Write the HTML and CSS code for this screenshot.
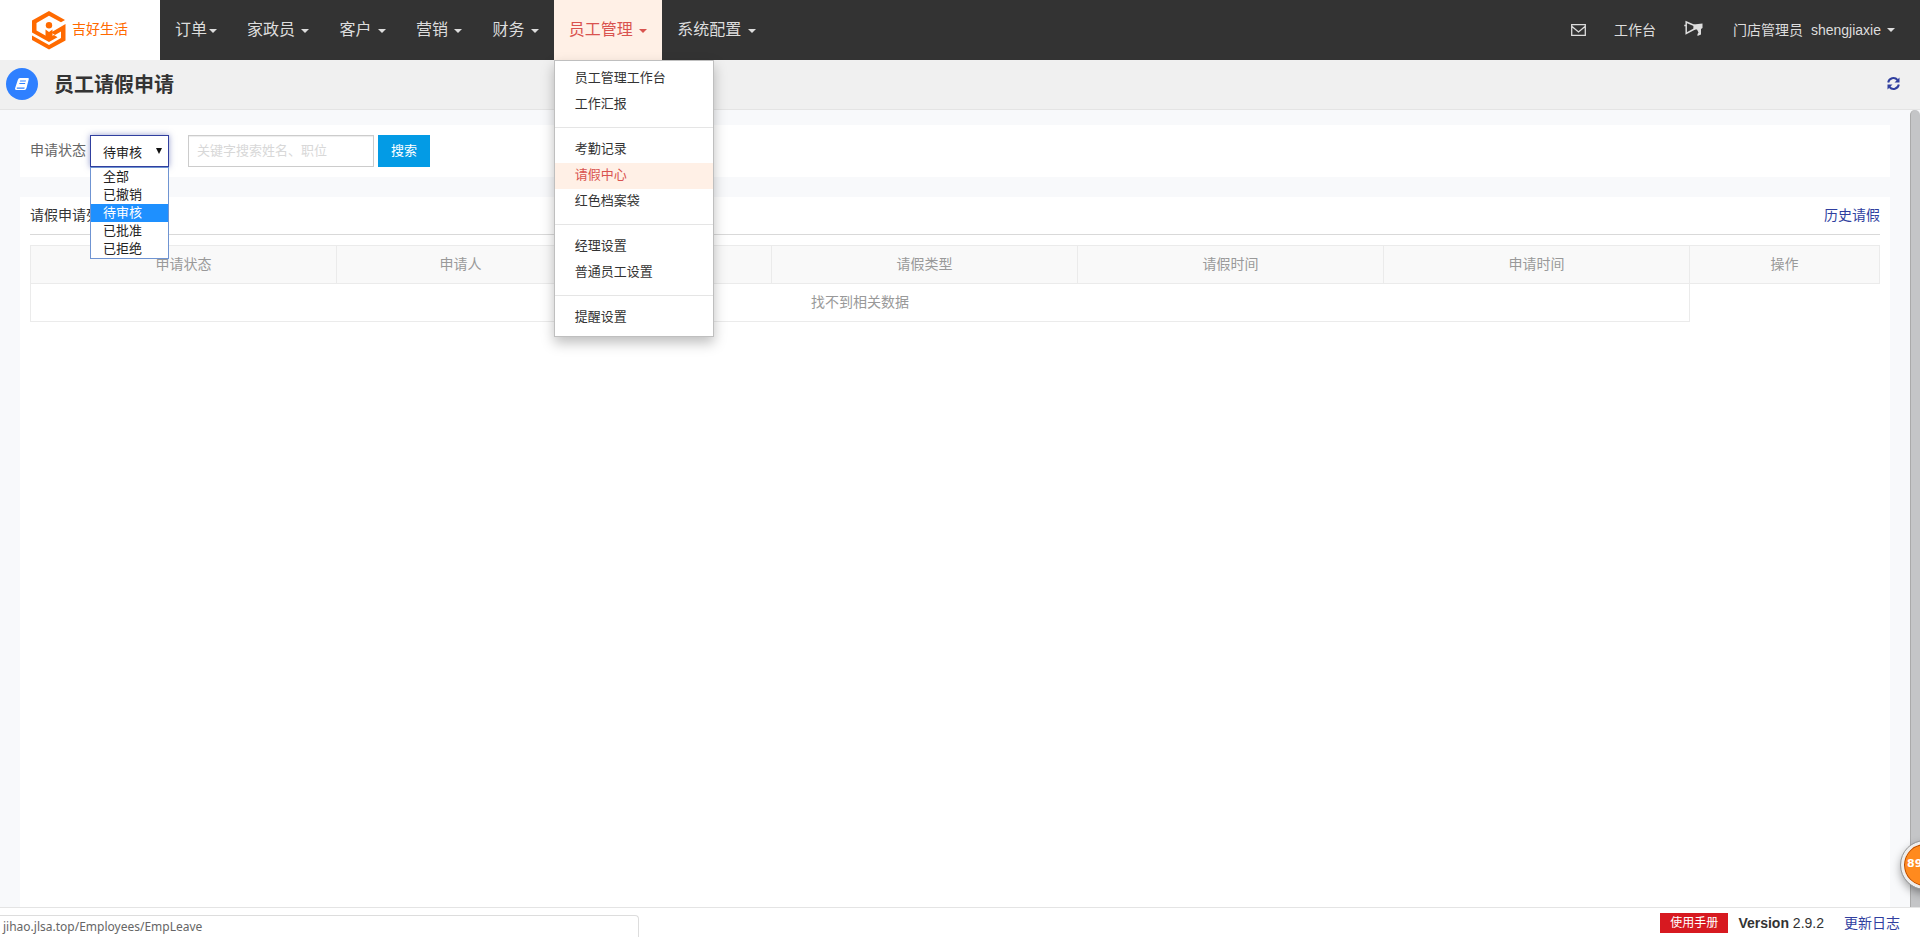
FILE: index.html
```html
<!DOCTYPE html>
<html lang="zh-CN">
<head>
<meta charset="utf-8">
<title>员工请假申请</title>
<link rel="stylesheet" href="styles.css">
</head>
<body>
<header class="topbar">
  <a class="brand" href="#">
    <svg class="brand-mark" viewBox="0 0 34 39" aria-hidden="true">
      <path fill="#ff6a00" d="M17 0 33 9l-4 2.300L17 4.800 4.500 12v7.500L17 26.500 22 24l3.500 2.200L17 31 0 21.500V9.500z"/>
      <path fill="#ff6a00" d="M33.500 13v16.500L17 38.500 0 29v-4.500l17 9.500 12-7v-6.500l-6 3.500-4-2.500z"/>
      <circle cx="17" cy="14.300" r="3.200" fill="#ff6a00"/>
      <path fill="#ff6a00" d="M13.500 18.500 17 21l3.500-2.500V26L17 28l-3.500-2z"/>
    </svg>
    <span>吉好生活</span>
  </a>
  <nav class="menu">
    <a class="menu-item" href="#">订单<i class="caret"></i></a>
    <a class="menu-item" href="#">家政员 <i class="caret"></i></a>
    <a class="menu-item" href="#">客户 <i class="caret"></i></a>
    <a class="menu-item" href="#">营销 <i class="caret"></i></a>
    <a class="menu-item" href="#">财务 <i class="caret"></i></a>
    <div class="menu-group">
      <a class="menu-item active" href="#">员工管理 <i class="caret"></i></a>
      <ul class="dropdown">
        <li><a href="#">员工管理工作台</a></li>
        <li><a href="#">工作汇报</a></li>
        <li class="divider"></li>
        <li><a href="#">考勤记录</a></li>
        <li><a class="current" href="#">请假中心</a></li>
        <li><a href="#">红色档案袋</a></li>
        <li class="divider"></li>
        <li><a href="#">经理设置</a></li>
        <li><a href="#">普通员工设置</a></li>
        <li class="divider"></li>
        <li><a href="#">提醒设置</a></li>
      </ul>
    </div>
    <a class="menu-item" href="#">系统配置 <i class="caret"></i></a>
  </nav>
  <div class="tools">
    <a href="#" aria-label="消息"><svg width="15" height="12" viewBox="0 0 15 12"><path fill="none" stroke="currentColor" stroke-width="1.300" d="M.7.700h13.600v10.600H.700zM1 2.500l6.500 5.500 6.500-5.500"/></svg></a>
    <a href="#">工作台</a>
    <a href="#" aria-label="公告"><svg class="horn" width="19" height="18" viewBox="0 0 19 18"><path fill="none" stroke="currentColor" stroke-width="1.500" d="M2.200 2v11.500L10.500 9V5.500zM.3 5.500h2"/><path fill="currentColor" d="M9.500 4.500 18.500 3.500V8L17 9v5.500L13.500 16v-2l1-1.500L13 9.500H9.500z"/></svg></a>
    <a class="user" href="#"><span>门店管理员</span><span>shengjiaxie</span><i class="caret"></i></a>
  </div>
</header>
<div class="titlebar">
  <span class="title-icon"><svg width="14" height="12" viewBox="0 0 14 12"><path fill="#fff" fill-rule="evenodd" d="M5 0h8q1 0 .8 1L11.500 10q-.5 2-2 2H1.500Q0 12 0 10.500L2.800 2Q3.500 0 5 0zM5.200 2.500 4.900 3.500h5.800l.3-1zM4.500 5l-.3 1H10l.3-1zM1.800 9.500q-.5 1.200.5 1.200h7l.4-1.200z"/></svg></span>
  <h1>员工请假申请</h1>
  <button class="refresh" type="button" aria-label="刷新"><svg width="13" height="13" viewBox="0 0 13 13"><path fill="none" stroke="currentColor" stroke-width="2" d="M1.200 5.500A5.300 5.300 0 0 1 10.500 3M11.800 7.500A5.300 5.300 0 0 1 2.500 10"/><path fill="currentColor" d="M12.500.500v5h-5zM.500 12.500v-5h5z"/></svg></button>
</div>
<main class="page">
  <form class="panel filter">
    <label for="status">申请状态</label>
    <div class="status-box">
      <select id="status"><option>待审核</option></select>
      <ul class="options">
        <li>全部</li>
        <li>已撤销</li>
        <li class="chosen">待审核</li>
        <li>已批准</li>
        <li>已拒绝</li>
      </ul>
    </div>
    <input class="keyword" type="text" aria-label="关键字" placeholder="关键字搜索姓名、职位">
    <button class="search" type="button">搜索</button>
  </form>
  <section class="panel list">
    <div class="list-head">
      <h2>请假申请列表</h2>
      <a href="#">历史请假</a>
    </div>
    <table>
      <colgroup><col class="c-wide"><col class="c-name"><col class="c-post"><col class="c-wide"><col class="c-wide"><col class="c-wide"><col></colgroup>
      <thead><tr><th>申请状态</th><th>申请人</th><th></th><th>请假类型</th><th>请假时间</th><th>申请时间</th><th>操作</th></tr></thead>
      <tbody><tr><td colspan="6">找不到相关数据</td></tr></tbody>
    </table>
  </section>
  <div class="scroll-thumb"></div>
</main>
<footer class="footer">
  <span class="link-status">jihao.jlsa.top/Employees/EmpLeave</span>
  <a class="manual" href="#">使用手册</a>
  <span class="version"><b>Version</b> 2.9.2</span>
  <a class="log" href="#">更新日志</a>
</footer>
<div class="float-badge"><span>89</span></div>
</body>
</html>
```
FILE: styles.css
```css
* { box-sizing: border-box; }
body {
  margin: 0;
  height: 100vh;
  display: flex;
  flex-direction: column;
  overflow: hidden;
  position: relative;
  background: #f8f9fb;
  color: #333;
  font: 14px/20px "Liberation Sans", "Noto Sans CJK SC", sans-serif;
}
a { color: #303f9f; text-decoration: none; }
ul { list-style: none; margin: 0; padding: 0; }

.topbar { display: flex; height: 60px; background: #333; flex: none; }
.brand {
  width: 160px;
  display: flex;
  align-items: center;
  gap: 6px;
  padding-left: 32px;
  background: #fff;
  color: #ff6a00;
}
.brand span { padding-bottom: 2px; }
.brand-mark { width: 34px; height: 39px; }
.menu { display: flex; }
.menu-item {
  display: block;
  height: 60px;
  padding: 0 15px;
  color: #ddd;
  font-size: 16px;
  line-height: 60px;
  white-space: nowrap;
}
.menu-item.active { background: #fff0e6; color: #d9534f; }
.caret {
  display: inline-block;
  margin-left: 2px;
  vertical-align: middle;
  border: 4px solid transparent;
  border-top-color: currentColor;
  border-bottom: 0;
}
.menu-group { position: relative; }
.dropdown {
  position: absolute;
  z-index: 5;
  top: 60px;
  left: 0;
  width: 160px;
  padding: 5px 0;
  background: #fff;
  border: 1px solid #bfbfbf;
  box-shadow: 0 6px 12px rgba(0, 0, 0, .25);
  font-size: 13px;
}
.dropdown a { display: block; padding: 2px 20px 4px; color: #333; }
.dropdown .current { background: #fff0e6; color: #d9534f; }
.divider { height: 1px; margin: 9px 0; background: #e5e5e5; }
.tools { display: flex; margin-left: auto; padding-right: 10px; }
.tools a { display: flex; align-items: center; padding: 0 14px; color: #ddd; }
.tools .horn { margin-bottom: 2px; }
.tools .user { gap: 8px; padding: 0 15px 0 16px; }
.tools .caret { margin-left: -2px; }

.titlebar {
  display: flex;
  align-items: center;
  height: 50px;
  padding: 0 20px 2px 6px;
  background: #f0f0f0;
  border-bottom: 1px solid #e4e4e4;
  flex: none;
}
.title-icon {
  display: flex;
  align-items: center;
  justify-content: center;
  width: 32px;
  height: 32px;
  border-radius: 50%;
  background: #2f80ff;
}
h1 { margin: 0 0 0 16px; padding-top: 2px; font-size: 20px; line-height: 28px; }
.refresh { margin-left: auto; padding: 0; border: 0; background: none; color: #303f9f; line-height: 0; }

.page {
  position: relative;
  flex: 1;
  min-height: 0;
  display: flex;
  flex-direction: column;
  gap: 20px;
  padding: 15px 30px 0 20px;
}
.panel { background: #fff; padding: 10px; }
.filter { display: flex; height: 52px; margin: 0; color: #666; }
.filter label { line-height: 30px; margin-right: 4px; }
.status-box { position: relative; width: 79px; }
select {
  width: 100%;
  height: 32px;
  padding: 2px 0 0 12px;
  border: 1px solid #303f9f;
  border-radius: 0;
  box-shadow: 0 0 6px rgba(48, 63, 159, .5);
  background: #fff;
  color: #222;
  font: 13px "Liberation Sans", "Noto Sans CJK SC", sans-serif;
  appearance: none;
}
.status-box::after {
  content: "";
  position: absolute;
  top: 13px;
  right: 7px;
  border: 3px solid transparent;
  border-top: 6px solid #111;
  border-bottom: 0;
}
.options {
  position: absolute;
  z-index: 4;
  top: 32px;
  left: 0;
  right: 0;
  background: #fff;
  border: 1px solid #6f94d2;
  color: #222;
  font-size: 13px;
  line-height: 18px;
}
.options li { padding-left: 12px; }
.options .chosen { background: #1e90ff; color: #fff; }
.keyword {
  width: 186px;
  height: 32px;
  margin: 0 4px 0 19px;
  padding: 0 8px 2px;
  border: 1px solid #ccc;
  box-shadow: inset 0 1px 1px rgba(0, 0, 0, .075);
  font: 13px "Liberation Sans", "Noto Sans CJK SC", sans-serif;
}
.keyword::placeholder { color: #d8d8d8; }
.search {
  width: 52px;
  height: 32px;
  padding: 0 0 3px;
  border: 0;
  background: #039be5;
  color: #fff;
  font: 13px "Liberation Sans", "Noto Sans CJK SC", sans-serif;
}

.list { flex: 1; min-height: 0; padding-top: 0; }
.list-head {
  display: flex;
  justify-content: space-between;
  align-items: center;
  height: 38px;
  margin-bottom: 10px;
  padding-bottom: 2px;
  border-bottom: 1px solid #d9d9d9;
}
h2 { margin: 0; font-size: 14px; font-weight: 400; }
table { width: 100%; table-layout: fixed; border-collapse: collapse; color: #999; }
.c-wide { width: 306px; }
.c-name { width: 248px; }
.c-post { width: 187px; }
th, td { height: 38px; padding: 0 0 2px; border: 1px solid #ebebeb; font-weight: 400; text-align: center; }
th { background: #f9f9f9; }
.scroll-thumb {
  position: absolute;
  top: 0;
  right: 0;
  bottom: 0;
  width: 10px;
  border-radius: 5px 5px 0 0;
  background: #c4c5c7;
  border-left: 1px solid #aaa;
}

.footer {
  position: relative;
  display: flex;
  align-items: center;
  justify-content: flex-end;
  height: 30px;
  padding-right: 20px;
  background: #fff;
  border-top: 1px solid #e4e4e4;
  flex: none;
}
.link-status {
  align-self: flex-end;
  width: 639px;
  height: 22px;
  margin-right: auto;
  padding-left: 3px;
  border: 1px solid #ddd;
  border-width: 1px 1px 0 0;
  border-radius: 0 4px 0 0;
  color: #666;
  font: 12px/22px "Noto Sans", sans-serif;
}
.manual { padding: 0 10px; background: #d71920; color: #fff; font-size: 12px; }
.version { margin: 0 20px 0 10px; }
.float-badge {
  position: absolute;
  z-index: 6;
  right: -29px;
  bottom: 48px;
  width: 48px;
  height: 48px;
  padding-left: 3px;
  border: 3px solid #eee;
  border-radius: 50%;
  outline: 1px solid #999;
  background: #ff8a1e;
  box-shadow: inset 0 0 0 1px #b84a00, 0 4px 10px rgba(0, 0, 0, .4);
  color: #fff;
  font: bold 11px/40px "DejaVu Sans", sans-serif;
}
```
